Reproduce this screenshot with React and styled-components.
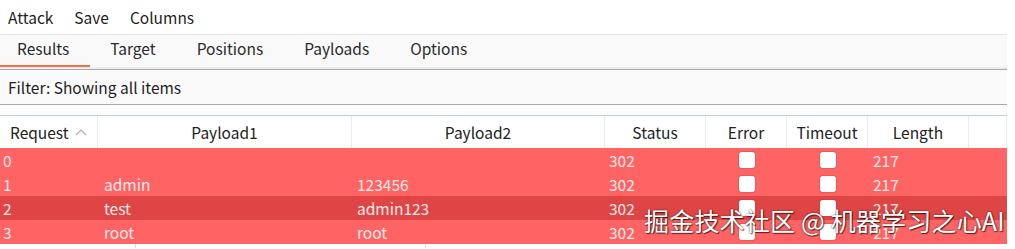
import React from 'react'
import styled, { createGlobalStyle } from 'styled-components'

const GlobalStyle = createGlobalStyle`
  html, body {
    margin: 0;
    padding: 0;
    background: #ffffff;
  }
  body {
    font-family: "Noto Sans CJK SC", "Noto Sans", sans-serif;
    color: #1e1e1e;
  }
`

const Page = styled.div`
  width: 1007px;
  position: relative;
  height: 249px;
  overflow: hidden;
`

const MenuBar = styled.div`
  display: flex;
  gap: 21px;
  height: 34px;
  align-items: center;
  padding-left: 8px;
  font-size: 15.5px;
`

const TabBar = styled.div`
  display: flex;
  height: 32px;
  background: #f9f9f9;
  border-top: 1px solid #e9e9e9;
  border-bottom: 2px solid #ececec;
`

const Tab = styled.div`
  height: 100%;
  box-sizing: border-box;
  padding: 0 ${props => props.padRight}px 4px ${props => props.padLeft}px;
  display: flex;
  align-items: center;
  font-size: 15.5px;
  color: #2a2a2a;
  border-bottom: 2px solid ${props => props.active ? '#f0704a' : 'transparent'};
`

const FilterBar = styled.div`
  height: 34px;
  display: flex;
  align-items: center;
  padding-left: 8px;
  background: #fafafa;
  border-top: 1px solid #a9a9a9;
  border-bottom: 1px solid #a9a9a9;
  font-size: 15.5px;
  color: #1e1e1e;
`

const Spacer = styled.div`
  height: 10px;
  background: #fcfcfc;
  border-bottom: 1px solid #b6d2ec;
`

const Grid = styled.div`
  display: grid;
  grid-template-columns: 98px 254px 253px 101px 81px 81px 101px 38px;
`

const HeadCell = styled.div`
  height: 32px;
  display: flex;
  align-items: center;
  justify-content: ${props => props.left ? 'flex-start' : 'center'};
  padding-left: ${props => props.left ? '10px' : '0'};
  border-right: 1px solid #ececec;
  background: #fff;
  font-size: 15.5px;
  color: #222;
  gap: 6px;
`

const Cell = styled.div`
  height: 24px;
  display: flex;
  align-items: center;
  justify-content: ${props => props.center ? 'center' : 'flex-start'};
  padding-left: ${props => props.pad}px;
  padding-bottom: 1px;
  box-sizing: border-box;
  background: ${props => props.dark ? '#e04545' : '#ff6464'};
  color: #ffeaea;
  font-size: 15.5px;
`

const Check = styled.span`
  width: 16px;
  height: 16px;
  border-radius: 3px;
  background: #ffffff;
  box-shadow: 0 0 0 1px rgba(150, 60, 60, 0.25);
`

const Below = styled.div`
  height: 4px;
  display: grid;
  grid-template-columns: 136px 290px 1fr;
`

const Rule = styled.div`
  border-right: ${props => props.line ? '1px solid #dcdcdc' : 'none'};
`

const Watermark = styled.div`
  position: absolute;
  left: 644px;
  top: 202px;
  font-size: 25px;
  color: #ffffff;
  letter-spacing: 0.2px;
  text-shadow: 0 0 2px rgba(0, 0, 0, 0.7), 1px 1px 1px rgba(0, 0, 0, 0.6);
  white-space: nowrap;
`

const Arrow = () => (
  <svg width="12" height="8" viewBox="0 0 12 8">
    <path d="M1 7 L6 2 L11 7" fill="none" stroke="#b0b0b0" strokeWidth="1.2" />
  </svg>
)

const tabs = [
  { name: 'Results', l: 17, r: 21, active: true },
  { name: 'Target', l: 20, r: 20 },
  { name: 'Positions', l: 21, r: 20 },
  { name: 'Payloads', l: 21, r: 20 },
  { name: 'Options', l: 21, r: 20 },
]

const headers = ['Payload1', 'Payload2', 'Status', 'Error', 'Timeout', 'Length', '']

const rows = [
  { id: '0', p1: '', p2: '' },
  { id: '1', p1: 'admin', p2: '123456' },
  { id: '2', p1: 'test', p2: 'admin123', dark: true },
  { id: '3', p1: 'root', p2: 'root' },
]

export default function App() {
  return (
    <Page>
      <GlobalStyle />
      <MenuBar>
        <span>Attack</span>
        <span>Save</span>
        <span>Columns</span>
      </MenuBar>
      <TabBar>
        {tabs.map(t => (
          <Tab key={t.name} active={t.active} padLeft={t.l} padRight={t.r}>{t.name}</Tab>
        ))}
      </TabBar>
      <FilterBar>Filter: Showing all items</FilterBar>
      <Spacer />
      <Grid>
        <HeadCell left>Request <Arrow /></HeadCell>
        {headers.map((h, i) => <HeadCell key={i}>{h}</HeadCell>)}
        {rows.map(r => (
          <React.Fragment key={r.id}>
            <Cell dark={r.dark} pad={3}>{r.id}</Cell>
            <Cell dark={r.dark} pad={6}>{r.p1}</Cell>
            <Cell dark={r.dark} pad={5}>{r.p2}</Cell>
            <Cell dark={r.dark} pad={4}>302</Cell>
            <Cell dark={r.dark} center><Check /></Cell>
            <Cell dark={r.dark} center><Check /></Cell>
            <Cell dark={r.dark} pad={5}>217</Cell>
            <Cell dark={r.dark} />
          </React.Fragment>
        ))}
      </Grid>
      <Below>
        <Rule line />
        <Rule line />
        <Rule />
      </Below>
      <Watermark>掘金技术社区 @ 机器学习之心AI</Watermark>
    </Page>
  )
}
